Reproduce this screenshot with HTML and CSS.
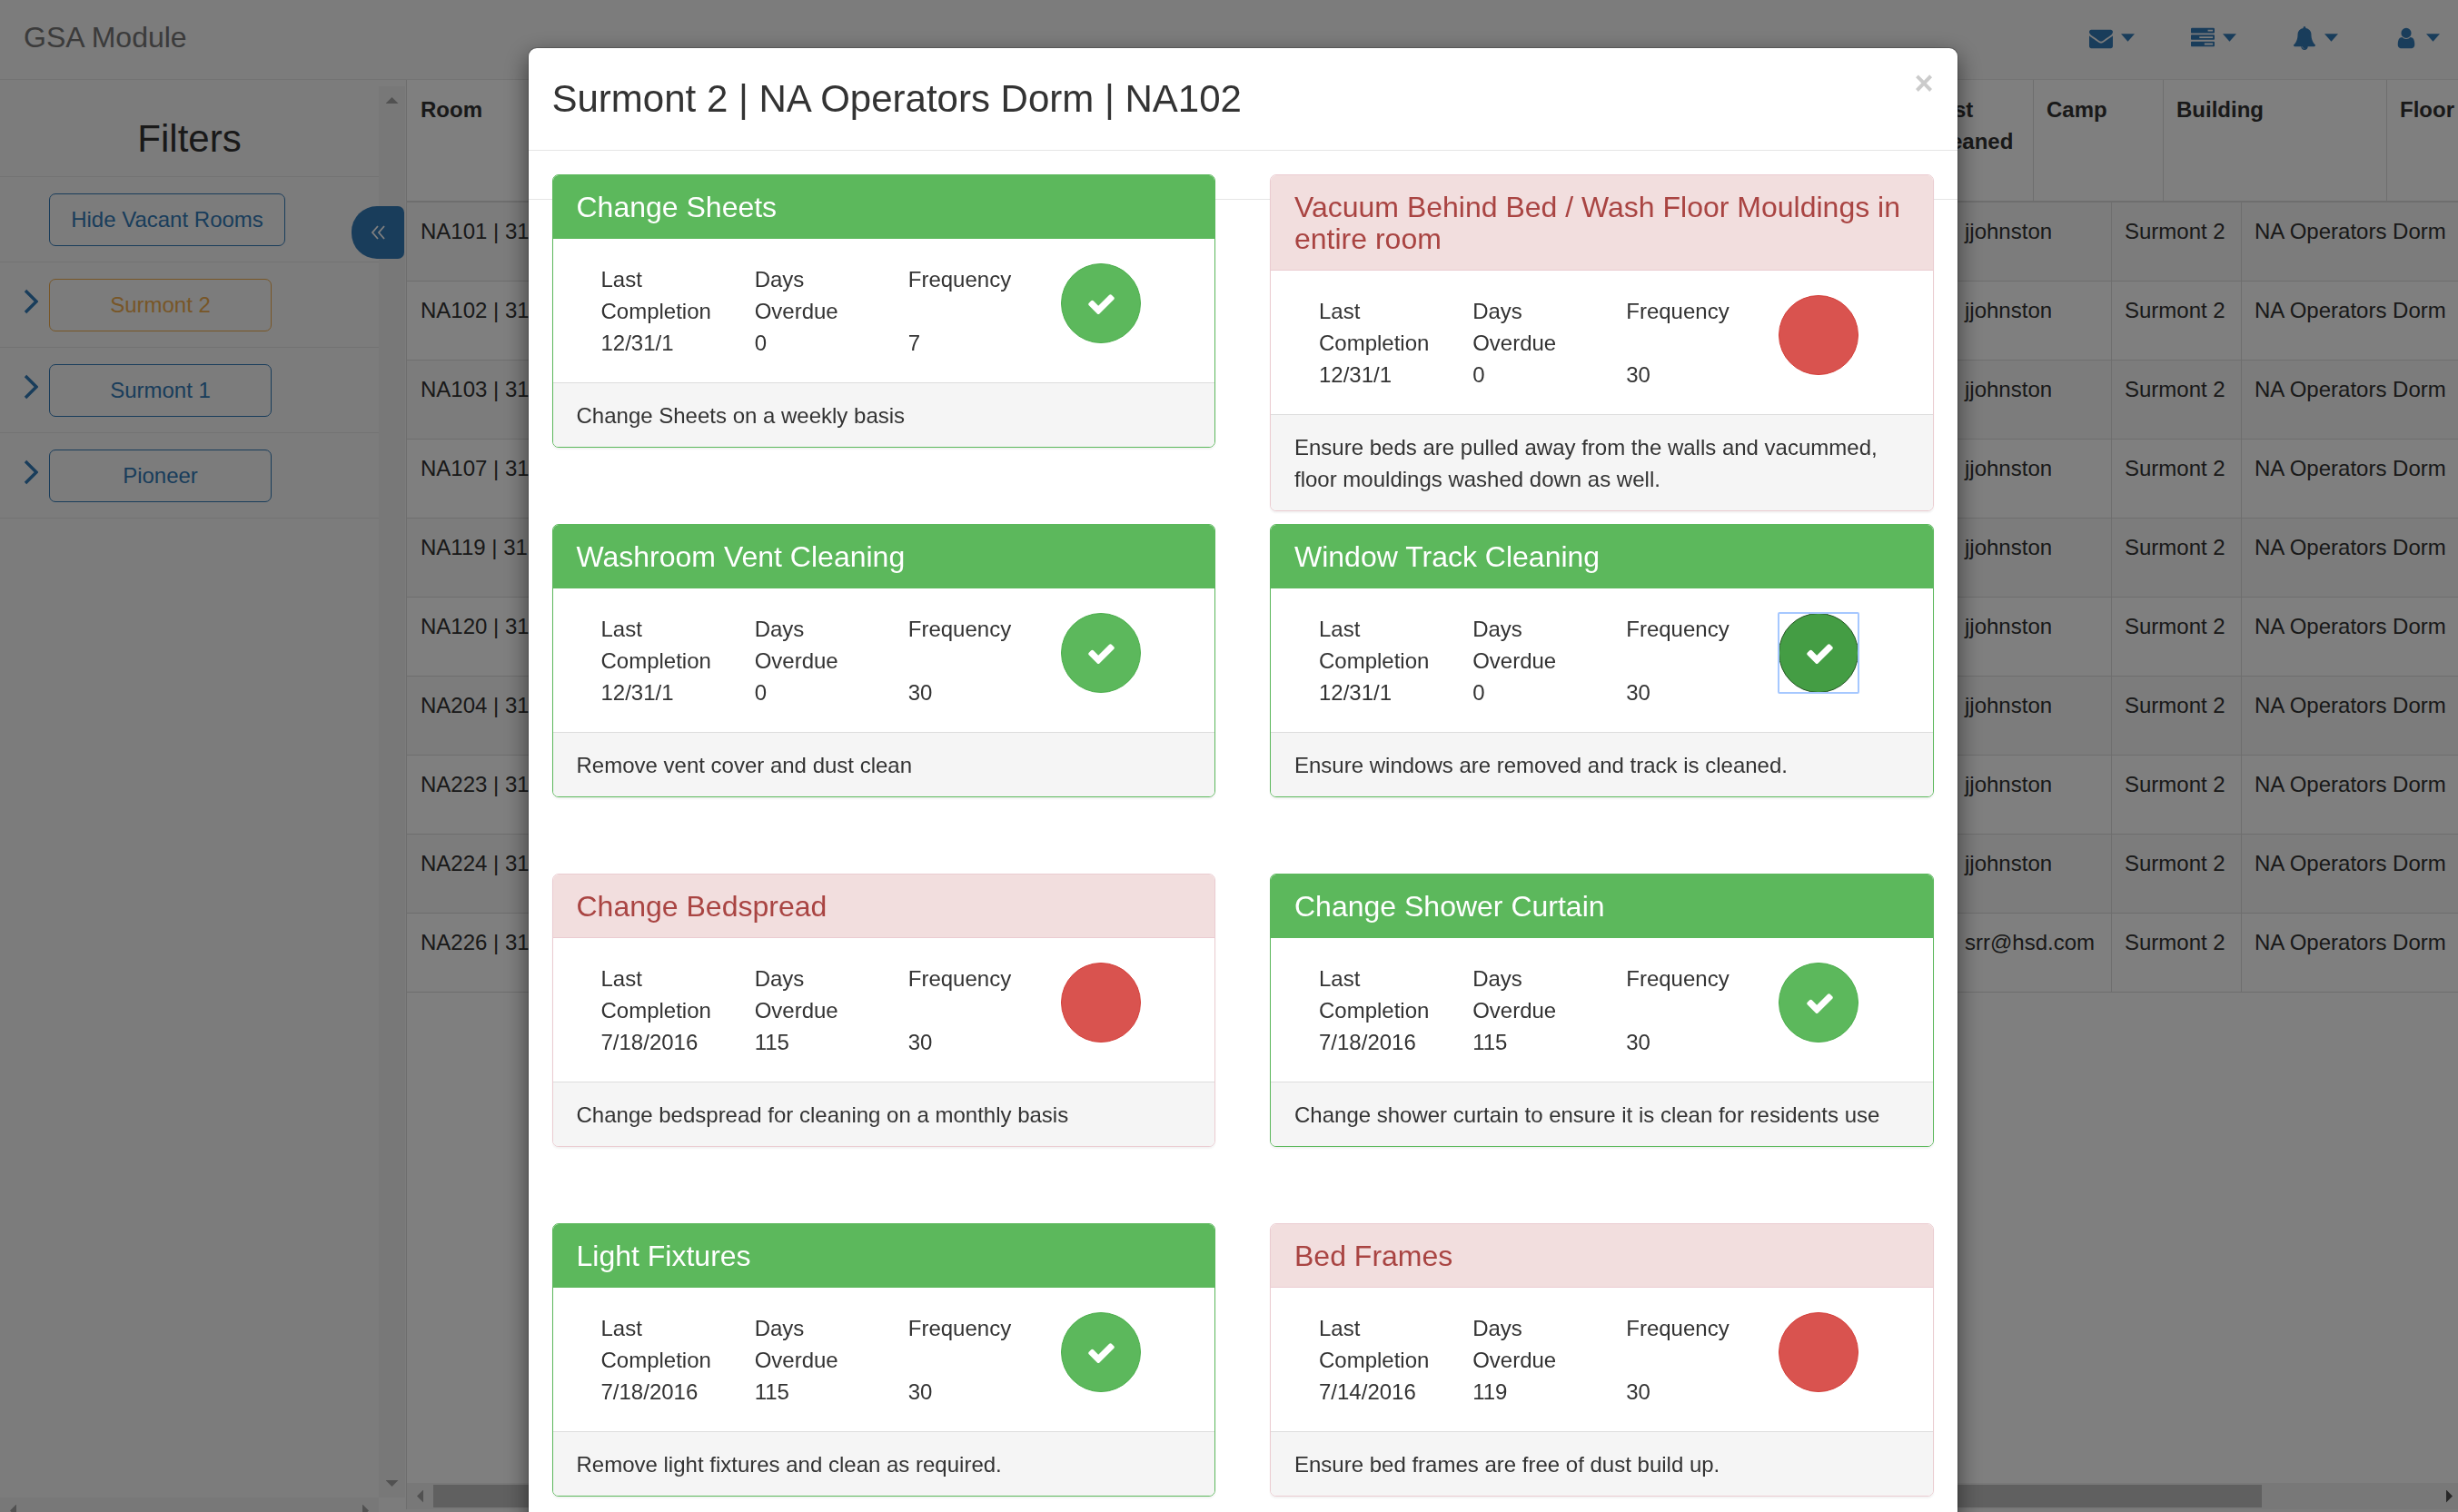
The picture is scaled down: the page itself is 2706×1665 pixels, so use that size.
FILE: index.html
```html
<!DOCTYPE html>
<html lang="en">
<head>
<meta charset="utf-8">
<title>GSA Module</title>
<link rel="stylesheet" href="styles.css">
</head>
<body>
<svg class="sprite" aria-hidden="true">
  <symbol id="check" viewBox="0 0 1792 1792"><path d="M1671 566q0 40-28 68l-724 724-136 136q-28 28-68 28t-68-28l-136-136-362-362q-28-28-28-68t28-68l136-136q28-28 68-28t68 28l294 295 656-657q28-28 68-28t68 28l136 136q28 28 28 68z"/></symbol>
  <symbol id="envelope" viewBox="0 0 1792 1792"><path d="M1792 710v794q0 66-47 113t-113 47h-1472q-66 0-113-47t-47-113v-794q44 49 101 87 362 246 497 345 57 42 92.500 65.500t94.500 48 110 24.500h2q51 0 110-24.500t94.500-48 92.500-65.500q170-123 498-345 57-39 100-87zm0-294q0 79-49 151t-122 123q-376 261-468 325-10 7-42.500 31t-54 38.500-52 32.500-57.500 27-50 9h-2q-23 0-50-9t-57.500-27-52-32.500-54-38.500-42.500-31q-91-64-262-182.500t-205-142.500q-62-42-117-115.500t-55-136.500q0-78 41.500-130t118.500-52h1472q65 0 112.500 47t47.500 113z"/></symbol>
  <symbol id="tasks" viewBox="0 0 1792 1792"><path d="M1024 1408h640v-128h-640v128zm-384-512h1024v-128h-1024v128zm640-512h384v-128h-384v128zm512 832v256q0 26-19 45t-45 19h-1664q-26 0-45-19t-19-45v-256q0-26 19-45t45-19h1664q26 0 45 19t19 45zm0-512v256q0 26-19 45t-45 19h-1664q-26 0-45-19t-19-45v-256q0-26 19-45t45-19h1664q26 0 45 19t19 45zm0-512v256q0 26-19 45t-45 19h-1664q-26 0-45-19t-19-45v-256q0-26 19-45t45-19h1664q26 0 45 19t19 45z"/></symbol>
  <symbol id="bell" viewBox="0 0 1792 1792"><path d="M912 1696q0-16-16-16-59 0-101.500-42.500t-42.500-101.500q0-16-16-16t-16 16q0 73 51.500 124.500t124.500 51.500q16 0 16-16zm816-288q0 52-38 90t-90 38h-448q0 106-75 181t-181 75-181-75-75-181h-448q-52 0-90-38t-38-90q50-42 91-88t85-119.500 74.500-158.500 50-206 19.500-260q0-152 117-282.500t307-158.500q-8-19-8-39 0-40 28-68t68-28 68 28 28 68q0 20-8 39 190 28 307 158.500t117 282.500q0 139 19.500 260t50 206 74.500 158.500 85 119.500 91 88z"/></symbol>
  <symbol id="user" viewBox="0 0 1792 1792"><path d="M1536 1399q0 109-62.500 187t-150.500 78h-854q-88 0-150.500-78t-62.500-187q0-85 8.500-160.500t31.500-152 58.500-131 94-89 134.500-34.500q131 128 313 128t313-128q76 0 134.500 34.500t94 89 58.500 131 31.500 152 8.500 160.500zm-256-887q0 159-112.500 271.500t-271.500 112.500-271.500-112.500-112.500-271.500 112.500-271.500 271.500-112.500 271.500 112.500 112.500 271.500z"/></symbol>
  <symbol id="caret" viewBox="0 0 14 8"><path d="M0 0h14l-7 8z"/></symbol>
  <symbol id="chevron" viewBox="0 0 16 28"><path d="M2 2l12 12L2 26" fill="none" stroke="currentColor" stroke-width="3.400"/></symbol>
  <symbol id="double-left" viewBox="0 0 16 16"><path d="M8 1L2 8l6 7M15 1L9 8l6 7" fill="none" stroke="currentColor" stroke-width="1.800"/></symbol>
</svg>

<header class="navbar">
  <a class="brand" href="#">GSA Module</a>
  <nav class="nav-menus">
    <button type="button" aria-label="Messages"><svg class="icon"><use href="#envelope"/></svg><svg class="caret"><use href="#caret"/></svg></button>
    <button type="button" aria-label="Tasks"><svg class="icon"><use href="#tasks"/></svg><svg class="caret"><use href="#caret"/></svg></button>
    <button type="button" aria-label="Alerts"><svg class="icon"><use href="#bell"/></svg><svg class="caret"><use href="#caret"/></svg></button>
    <button type="button" aria-label="Account"><svg class="icon"><use href="#user"/></svg><svg class="caret"><use href="#caret"/></svg></button>
  </nav>
</header>

<div class="workspace">
  <aside class="sidebar">
    <div class="filters">
      <h2>Filters</h2>
      <div class="filter"><span class="expander"></span><button type="button" class="btn wide">Hide Vacant Rooms</button></div>
      <div class="filter"><svg class="expander"><use href="#chevron"/></svg><button type="button" class="btn active">Surmont 2</button></div>
      <div class="filter"><svg class="expander"><use href="#chevron"/></svg><button type="button" class="btn">Surmont 1</button></div>
      <div class="filter"><svg class="expander"><use href="#chevron"/></svg><button type="button" class="btn">Pioneer</button></div>
    </div>
    <div class="scroll-y"><i class="arrow up"></i><i class="arrow down"></i></div>
    <div class="scroll-x"><i class="arrow left"></i><i class="arrow right"></i></div>
    <button type="button" class="collapse" aria-label="Collapse filters"><svg><use href="#double-left"/></svg></button>
  </aside>

  <main class="rooms">
    <table class="head">
      <colgroup><col><col class="w-by"><col class="w-camp"><col class="w-building"><col class="w-floor"></colgroup>
      <thead><tr><th>Room</th><th>Last Cleaned By</th><th>Camp</th><th>Building</th><th>Floor</th></tr></thead>
    </table>
    <table class="body">
      <colgroup><col><col class="w-user"><col class="w-camp"><col class="w-dorm"></colgroup>
      <tbody>
        <tr><td>NA101 | 31</td><td>jjohnston</td><td>Surmont 2</td><td>NA Operators Dorm</td></tr>
        <tr><td>NA102 | 31</td><td>jjohnston</td><td>Surmont 2</td><td>NA Operators Dorm</td></tr>
        <tr><td>NA103 | 31</td><td>jjohnston</td><td>Surmont 2</td><td>NA Operators Dorm</td></tr>
        <tr><td>NA107 | 31</td><td>jjohnston</td><td>Surmont 2</td><td>NA Operators Dorm</td></tr>
        <tr><td>NA119 | 31</td><td>jjohnston</td><td>Surmont 2</td><td>NA Operators Dorm</td></tr>
        <tr><td>NA120 | 31</td><td>jjohnston</td><td>Surmont 2</td><td>NA Operators Dorm</td></tr>
        <tr><td>NA204 | 31</td><td>jjohnston</td><td>Surmont 2</td><td>NA Operators Dorm</td></tr>
        <tr><td>NA223 | 31</td><td>jjohnston</td><td>Surmont 2</td><td>NA Operators Dorm</td></tr>
        <tr><td>NA224 | 31</td><td>jjohnston</td><td>Surmont 2</td><td>NA Operators Dorm</td></tr>
        <tr><td>NA226 | 31</td><td>srr@hsd.com</td><td>Surmont 2</td><td>NA Operators Dorm</td></tr>
      </tbody>
    </table>
    <div class="table-scroll"><i class="arrow left"></i><div class="track"><div class="thumb"></div></div><i class="arrow right dark"></i></div>
  </main>
</div>

<div class="backdrop">
  <section class="modal" role="dialog" aria-labelledby="modal-title">
    <header class="modal-header">
      <h1 id="modal-title">Surmont 2 | NA Operators Dorm | NA102</h1>
      <button type="button" class="close" aria-label="Close">×</button>
    </header>
    <div class="modal-body">
      <article class="panel done">
        <h3>Change Sheets</h3>
        <div class="stats"><p>Last<br>Completion<br>12/31/1</p><p>Days<br>Overdue<br>0</p><p>Frequency<br><br>7</p><button type="button" class="status" aria-label="Done"><svg><use href="#check"/></svg></button></div>
        <footer>Change Sheets on a weekly basis</footer>
      </article>
      <article class="panel due">
        <h3>Vacuum Behind Bed / Wash Floor Mouldings in entire room</h3>
        <div class="stats"><p>Last<br>Completion<br>12/31/1</p><p>Days<br>Overdue<br>0</p><p>Frequency<br><br>30</p><button type="button" class="status" aria-label="Not done"></button></div>
        <footer>Ensure beds are pulled away from the walls and vacummed, floor mouldings washed down as well.</footer>
      </article>
      <article class="panel done">
        <h3>Washroom Vent Cleaning</h3>
        <div class="stats"><p>Last<br>Completion<br>12/31/1</p><p>Days<br>Overdue<br>0</p><p>Frequency<br><br>30</p><button type="button" class="status" aria-label="Done"><svg><use href="#check"/></svg></button></div>
        <footer>Remove vent cover and dust clean</footer>
      </article>
      <article class="panel done">
        <h3>Window Track Cleaning</h3>
        <div class="stats"><p>Last<br>Completion<br>12/31/1</p><p>Days<br>Overdue<br>0</p><p>Frequency<br><br>30</p><button type="button" class="status focused" aria-label="Done"><svg><use href="#check"/></svg></button></div>
        <footer>Ensure windows are removed and track is cleaned.</footer>
      </article>
      <article class="panel due">
        <h3>Change Bedspread</h3>
        <div class="stats"><p>Last<br>Completion<br>7/18/2016</p><p>Days<br>Overdue<br>115</p><p>Frequency<br><br>30</p><button type="button" class="status" aria-label="Not done"></button></div>
        <footer>Change bedspread for cleaning on a monthly basis</footer>
      </article>
      <article class="panel done">
        <h3>Change Shower Curtain</h3>
        <div class="stats"><p>Last<br>Completion<br>7/18/2016</p><p>Days<br>Overdue<br>115</p><p>Frequency<br><br>30</p><button type="button" class="status" aria-label="Done"><svg><use href="#check"/></svg></button></div>
        <footer>Change shower curtain to ensure it is clean for residents use</footer>
      </article>
      <article class="panel done">
        <h3>Light Fixtures</h3>
        <div class="stats"><p>Last<br>Completion<br>7/18/2016</p><p>Days<br>Overdue<br>115</p><p>Frequency<br><br>30</p><button type="button" class="status" aria-label="Done"><svg><use href="#check"/></svg></button></div>
        <footer>Remove light fixtures and clean as required.</footer>
      </article>
      <article class="panel due">
        <h3>Bed Frames</h3>
        <div class="stats"><p>Last<br>Completion<br>7/14/2016</p><p>Days<br>Overdue<br>119</p><p>Frequency<br><br>30</p><button type="button" class="status" aria-label="Not done"></button></div>
        <footer>Ensure bed frames are free of dust build up.</footer>
      </article>
    </div>
  </section>
</div>
</body>
</html>
```
FILE: styles.css
```css
* { box-sizing: border-box; }

body {
  margin: 0;
  height: 100vh;
  display: flex;
  flex-direction: column;
  overflow: hidden;
  background: #f8f8f8;
  color: #333;
  font: 24px/35px "Liberation Sans", Arial, sans-serif;
}

h1, h2, h3, p { margin: 0; font-weight: 400; }
button { font: inherit; padding: 0; cursor: pointer; }
svg { fill: currentColor; }
.sprite { display: none; }

/* Top bar */
.navbar {
  flex: none;
  height: 88px;
  display: flex;
  align-items: center;
  justify-content: space-between;
  padding: 0 18px 4px 26px;
  border-bottom: 1px solid #e7e7e7;
}
.brand { color: #777; font-size: 32px; text-decoration: none; }
.nav-menus { display: flex; gap: 60px; }
.nav-menus button {
  width: 52px;
  display: flex;
  align-items: center;
  gap: 9px;
  border: 0;
  background: none;
  color: #337ab7;
}
.icon { width: 26px; height: 26px; }
.caret { width: 15px; height: 9px; }

/* Sidebar */
.workspace { flex: 1; min-height: 0; display: flex; }
.sidebar {
  position: relative;
  flex: none;
  width: 447px;
  padding-top: 7px;
  display: grid;
  grid-template-columns: 1fr 29px;
  grid-template-rows: 1fr 29px;
  height: calc(100% + 13px);
  padding-right: 1px;
}
.filters h2 {
  font-size: 42px;
  line-height: 46px;
  padding: 35px 0 18px;
  text-align: center;
  border-bottom: 1px solid #e7e7e7;
}
.filter {
  display: flex;
  align-items: center;
  height: 94px;
  border-bottom: 1px solid #e7e7e7;
}
.expander { width: 16px; height: 28px; margin: 0 12px 8px 26px; color: #337ab7; }
.btn {
  width: 245px;
  height: 58px;
  border: 1px solid #337ab7;
  border-radius: 7px;
  background: none;
  color: #337ab7;
}
.btn.wide { width: 260px; }
.btn.active { color: #f0ad4e; border-color: #f0ad4e; }

.collapse {
  position: absolute;
  top: 139px;
  right: 2px;
  width: 58px;
  height: 58px;
  border: 0;
  border-radius: 28px 7px 7px 28px;
  background: #337ab7;
  color: #fff;
}
.collapse svg { width: 16px; height: 16px; display: block; margin: 0 auto; }

/* Scroll bars */
.scroll-y, .scroll-x, .table-scroll { background: #f1f1f1; display: flex; justify-content: space-between; align-items: center; }
.scroll-y { flex-direction: column; padding: 12px 0; }
.scroll-x { padding: 0 11px; }
.arrow { width: 7px; height: 14px; background: #a3a3a3; }
.arrow.left { clip-path: polygon(100% 0, 100% 100%, 0 50%); }
.arrow.right { clip-path: polygon(0 0, 0 100%, 100% 50%); }
.arrow.up { width: 14px; height: 7px; clip-path: polygon(0 100%, 100% 100%, 50% 0); }
.arrow.down { width: 14px; height: 7px; clip-path: polygon(0 0, 100% 0, 50% 100%); }
.arrow.dark { background: #505050; }

/* Room table */
.rooms {
  flex: 1;
  min-width: 0;
  display: flex;
  flex-direction: column;
  border-left: 1px solid #ddd;
  background: #fff;
  margin-bottom: 3px;
}
table { width: 100%; table-layout: fixed; border-collapse: separate; border-spacing: 0; }
th, td { padding: 14px; text-align: left; vertical-align: top; border-left: 1px solid #ddd; }
th:first-child, td:first-child { border-left: 0; padding-left: 15px; }
th { height: 135px; padding: 15px 14px 13px; border-bottom: 2px solid #ddd; }
td { height: 87px; border-bottom: 1px solid #ddd; white-space: nowrap; }
tbody tr:nth-child(odd) { background: #f9f9f9; }
.w-by { width: 130px; }
.w-camp { width: 143px; }
.w-building { width: 246px; }
.w-floor { width: 79px; }
.w-user { width: 176px; }
.w-dorm { width: 239px; }
.table-scroll { height: 29px; margin-top: auto; padding: 0 6px 0 11px; gap: 11px; }
.track { flex: 1; padding-right: 192px; }
.thumb { height: 25px; background: #c1c1c1; }

/* Dialog */
.backdrop {
  position: fixed;
  inset: 0;
  overflow: hidden;
  padding: 52px 0 0 30px;
  background: rgba(0, 0, 0, .5);
}
.modal {
  width: 1575px;
  max-width: 100%;
  margin: 0 auto;
  background: #fff;
  background-clip: padding-box;
  border: 1px solid rgba(0, 0, 0, .2);
  border-radius: 10px;
  box-shadow: 0 9px 26px rgba(0, 0, 0, .5);
}
.modal-header {
  display: flex;
  justify-content: space-between;
  align-items: flex-start;
  height: 113px;
  padding: 26px;
  border-bottom: 1px solid #e5e5e5;
}
.modal-header h1 { font-size: 42px; line-height: 60px; }
.close { border: 0; background: none; color: #000; opacity: .2; font-size: 36px; line-height: 26px; font-weight: 700; }
.modal-body {
  display: grid;
  grid-template-columns: 1fr 1fr;
  grid-auto-rows: 385px;
  align-items: start;
  column-gap: 60px;
  padding: 26px;
  background: linear-gradient(#e5e5e5, #e5e5e5) 0 53px / 100% 1px no-repeat;
}

/* Task panels */
.panel {
  border: 1px solid #5cb85c;
  border-radius: 7px;
  background: #fff;
  box-shadow: 0 2px 2px rgba(0, 0, 0, .05);
  overflow: hidden;
}
.panel h3 {
  padding: 18px 26px 17px;
  font-size: 32px;
  line-height: 35px;
  background: #5cb85c;
  color: #fff;
}
.panel.due { border-color: #ebccd1; }
.panel.due h3 { background: #f2dede; color: #a94442; border-bottom: 1px solid #ebccd1; padding-bottom: 16px; }
.stats { display: grid; grid-template-columns: repeat(4, 1fr); padding: 27px 25px 26px 27px; height: 158px; }
.stats p { padding-left: 26px; }
.status {
  position: relative;
  width: 88px;
  height: 88px;
  margin-left: 25px;
  border: 1px solid #4cae4c;
  border-radius: 50%;
  background: #5cb85c;
  color: #fff;
}
.status svg { display: block; width: 33px; height: 33px; margin: 0 auto; }
.done .status { padding-left: 2px; }
.due .status { background: #d9534f; border-color: #d43f3a; }
.status.focused { background: #449d44; border-color: #255625; }
.status.focused::after {
  content: "";
  position: absolute;
  inset: -2px;
  border: 2px solid #a6c8ff;
  border-radius: 2px;
}
.panel footer { padding: 18px 26px 17px; border-top: 1px solid #ddd; background: #f5f5f5; }
```
